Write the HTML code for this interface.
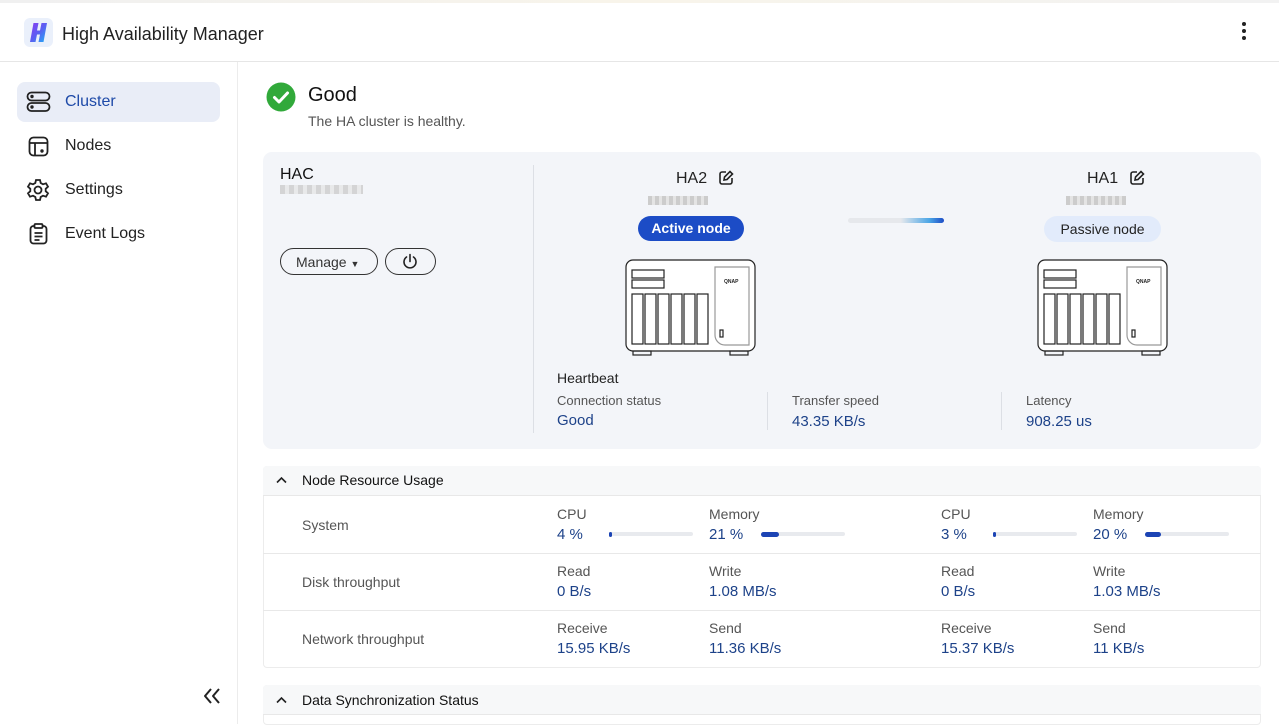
<!DOCTYPE html>
<html><head><meta charset="utf-8"><style>
*{margin:0;padding:0;box-sizing:border-box}
body{width:1279px;height:724px;overflow:hidden;background:#fff;font-family:"Liberation Sans",sans-serif;color:#222;position:relative}
.a{position:absolute;white-space:nowrap}
.t{transform:translateY(1px)}
.lbl{font-size:13px;color:#555}
.val{font-size:15px;color:#1d4289}
.side{font-size:16px;color:#222}
.bar{position:absolute;height:4px;background:#e8eaee;border-radius:2px}
.bar i{position:absolute;left:0;top:-0.5px;height:5px;background:#1c44b4;border-radius:3px}
.row{position:absolute;left:263px;width:998px;border-bottom:1px solid #e8e8e8}
</style></head><body>
<div class="a" style="left:0;top:0;width:1279px;height:3px;background:linear-gradient(90deg,#f0f0f0,#f8f4ea,#f2f2f2)"></div>
<svg class="a" style="left:24px;top:18px" width="29" height="29" viewBox="0 0 29 29"><rect width="29" height="29" rx="6" fill="#eaf0fb"/><defs><linearGradient id="g" x1="0" y1="0" x2="1" y2="1"><stop offset="0" stop-color="#8a3cf0"/><stop offset="0.5" stop-color="#5a5ef2"/><stop offset="1" stop-color="#20b0f5"/></linearGradient></defs><path d="M6 24 L9.5 5 L14.5 5 L13 12.5 L16 12.5 L17.5 5 L23 5 L19.5 24 L14.5 24 L16 16.5 L13 16.5 L11.5 24Z" fill="url(#g)"/></svg>
<div class="a" style="left:62px;top:24px;font-size:18px;color:#222">High Availability Manager</div>
<div class="a" style="left:1242px;top:22px;width:4px;height:18px"><div style="width:4px;height:4px;border-radius:2px;background:#222;margin-bottom:3px"></div><div style="width:4px;height:4px;border-radius:2px;background:#222;margin-bottom:3px"></div><div style="width:4px;height:4px;border-radius:2px;background:#222"></div></div>
<div class="a" style="left:0;top:61px;width:1279px;height:1px;background:#e6e6e6"></div>
<div class="a" style="left:237px;top:62px;width:1px;height:662px;background:#ececec"></div>

<div class="a" style="left:17px;top:82px;width:203px;height:40px;background:#e9edf7;border-radius:8px"></div>
<svg class="a" style="left:26px;top:91px" width="25" height="22" viewBox="0 0 25 22" fill="none" stroke="#222" stroke-width="1.8"><rect x="1.5" y="1.5" width="22" height="8" rx="4"/><rect x="1.5" y="12" width="22" height="8" rx="4"/><circle cx="6" cy="5.5" r=".8" fill="#222"/><circle cx="6" cy="16" r=".8" fill="#222"/></svg>
<div class="a side" style="left:65px;top:93px;color:#1e4aa8">Cluster</div>
<svg class="a" style="left:28px;top:136px" width="21" height="21" viewBox="0 0 21 21" fill="none" stroke="#222" stroke-width="1.8"><rect x="1.5" y="1.5" width="18" height="18" rx="4"/><path d="M1.5 7h18M7 7v12.5"/><circle cx="14" cy="15" r=".8" fill="#222"/></svg>
<div class="a side" style="left:65px;top:137px">Nodes</div>
<svg class="a" style="left:26px;top:178px" width="24" height="24" viewBox="0 0 24 24" fill="none" stroke="#222" stroke-width="1.8"><path d="M10 2h4l.7 3 2.3 1.3 3-1 2 3.4-2.3 2.1v2.4l2.3 2.1-2 3.4-3-1-2.3 1.3-.7 3h-4l-.7-3L7 17.7l-3 1-2-3.4 2.3-2.1v-2.4L2 8.7l2-3.4 3 1L9.3 5z"/><circle cx="12" cy="12" r="3.5"/></svg>
<div class="a side" style="left:65px;top:181px">Settings</div>
<svg class="a" style="left:29px;top:223px" width="19" height="22" viewBox="0 0 19 22" fill="none" stroke="#222" stroke-width="1.8"><rect x="1.5" y="3" width="16" height="17.5" rx="3"/><rect x="5.5" y="1" width="8" height="4" rx="1" fill="#fff"/><path d="M5.5 10h8M5.5 13.5h8M5.5 17h5"/></svg>
<div class="a side" style="left:65px;top:225px">Event Logs</div>
<svg class="a" style="left:203px;top:688px" width="18" height="16" viewBox="0 0 18 16" fill="none" stroke="#222" stroke-width="2" stroke-linejoin="round"><path d="M8 1L2 8l6 7M16 1l-6 7 6 7"/></svg>

<svg class="a" style="left:266px;top:82px" width="30" height="30" viewBox="0 0 30 30"><circle cx="15" cy="15" r="14.5" fill="#31a93a"/><path d="M8.5 15.5l4.5 4.5 8.5-9" fill="none" stroke="#fff" stroke-width="3" stroke-linecap="round" stroke-linejoin="round"/></svg>
<div class="a" style="left:308px;top:84px;font-size:20px;color:#111">Good</div>
<div class="a" style="left:308px;top:113px;font-size:14px;color:#555">The HA cluster is healthy.</div>

<div class="a" style="left:263px;top:152px;width:998px;height:297px;background:#f3f5f9;border-radius:9px"></div>
<div class="a" style="left:280px;top:166px;font-size:16px;color:#111">HAC</div>
<div class="a" style="left:280px;top:185px;width:83px;height:9px;background:repeating-linear-gradient(90deg,#ccc 0 5px,#e6e6e6 5px 9px);opacity:.8"></div>
<div class="a" style="left:280px;top:248px;width:98px;height:27px;border:1px solid #333;border-radius:14px;font-size:14px;padding:5px 0 0 15px;color:#333">Manage <span style="font-size:9px">▼</span></div>
<div class="a" style="left:385px;top:248px;width:51px;height:27px;border:1px solid #333;border-radius:14px"></div>
<svg class="a" style="left:402px;top:253px" width="16" height="17" viewBox="0 0 16 17" fill="none" stroke="#222" stroke-width="1.6" stroke-linecap="round"><path d="M8 1.5v7M4.5 4a6 6 0 1 0 7 0"/></svg>
<div class="a" style="left:533px;top:165px;width:1px;height:268px;background:#dcdfe5"></div>

<div class="a" style="left:676px;top:170px;font-size:16px;color:#222">HA2</div>
<svg class="a" style="left:718px;top:170px" width="16" height="16" viewBox="0 0 16 16" fill="none" stroke="#222" stroke-width="1.6"><path d="M8 2H4a2 2 0 0 0-2 2v8a2 2 0 0 0 2 2h8a2 2 0 0 0 2-2V8"/><path d="M6 10l.5-3L12 1.5l2.5 2.5L9 9.5z"/></svg>
<div class="a" style="left:648px;top:196px;width:60px;height:9px;background:repeating-linear-gradient(90deg,#ccc 0 4px,#e4e4e4 4px 7px)"></div>
<div class="a" style="left:638px;top:216px;width:106px;height:25px;background:#1c4cc6;border-radius:13px;color:#fff;font-size:14px;font-weight:bold;text-align:center;line-height:25px">Active node</div>
<div class="a" style="left:1087px;top:170px;font-size:16px;color:#222">HA1</div>
<svg class="a" style="left:1129px;top:170px" width="16" height="16" viewBox="0 0 16 16" fill="none" stroke="#222" stroke-width="1.6"><path d="M8 2H4a2 2 0 0 0-2 2v8a2 2 0 0 0 2 2h8a2 2 0 0 0 2-2V8"/><path d="M6 10l.5-3L12 1.5l2.5 2.5L9 9.5z"/></svg>
<div class="a" style="left:1066px;top:196px;width:60px;height:9px;background:repeating-linear-gradient(90deg,#ccc 0 4px,#e4e4e4 4px 7px)"></div>
<div class="a" style="left:1044px;top:216px;width:117px;height:26px;background:#e2ebfb;border-radius:13px;color:#222;font-size:14px;text-align:center;line-height:26px">Passive node</div>
<div class="a" style="left:848px;top:218px;width:96px;height:5px;border-radius:3px;background:linear-gradient(90deg,#e6e8ec 0,#e6e8ec 55%,#4aa5e6 85%,#1c4cc6 100%)"></div>

<svg class="a" style="left:625px;top:259px" width="131" height="97" viewBox="0 0 131 97" fill="none" stroke="#222" stroke-width="1.2">
<rect x="1" y="1" width="129" height="91" rx="7" fill="#fff"/><rect x="7" y="11" width="32" height="8"/><rect x="7" y="21" width="32" height="8"/>
<rect x="7" y="35" width="11" height="50"/><rect x="20" y="35" width="11" height="50"/><rect x="33" y="35" width="11" height="50"/><rect x="46" y="35" width="11" height="50"/><rect x="59" y="35" width="11" height="50"/><rect x="72" y="35" width="11" height="50"/>
<path d="M90 8h34v78H100a10 10 0 0 1-10-10z" stroke="#999"/><rect x="95" y="71" width="3" height="7"/>
<text x="99" y="24" font-size="5" font-weight="bold" fill="#222" stroke="none" font-family="Liberation Sans">QNAP</text>
<rect x="8" y="92" width="18" height="4"/><rect x="105" y="92" width="18" height="4"/></svg>
<svg class="a" style="left:1037px;top:259px" width="131" height="97" viewBox="0 0 131 97" fill="none" stroke="#222" stroke-width="1.2">
<rect x="1" y="1" width="129" height="91" rx="7" fill="#fff"/><rect x="7" y="11" width="32" height="8"/><rect x="7" y="21" width="32" height="8"/>
<rect x="7" y="35" width="11" height="50"/><rect x="20" y="35" width="11" height="50"/><rect x="33" y="35" width="11" height="50"/><rect x="46" y="35" width="11" height="50"/><rect x="59" y="35" width="11" height="50"/><rect x="72" y="35" width="11" height="50"/>
<path d="M90 8h34v78H100a10 10 0 0 1-10-10z" stroke="#999"/><rect x="95" y="71" width="3" height="7"/>
<text x="99" y="24" font-size="5" font-weight="bold" fill="#222" stroke="none" font-family="Liberation Sans">QNAP</text>
<rect x="8" y="92" width="18" height="4"/><rect x="105" y="92" width="18" height="4"/></svg>

<div class="a t" style="left:557px;top:369px;font-size:14px;color:#222">Heartbeat</div>
<div class="a lbl t" style="left:557px;top:392px">Connection status</div>
<div class="a val t" style="left:557px;top:411px">Good</div>
<div class="a" style="left:767px;top:392px;width:1px;height:38px;background:#dcdfe5"></div>
<div class="a lbl t" style="left:792px;top:392px">Transfer speed</div>
<div class="a val t" style="left:792px;top:412px">43.35 KB/s</div>
<div class="a" style="left:1001px;top:392px;width:1px;height:38px;background:#dcdfe5"></div>
<div class="a lbl t" style="left:1026px;top:392px">Latency</div>
<div class="a val t" style="left:1026px;top:412px">908.25 us</div>

<div class="a" style="left:263px;top:466px;width:998px;height:202px;border:1px solid #ececec;border-radius:4px"></div>
<div class="row" style="top:466px;height:30px;background:#f7f8f9;border-radius:4px 4px 0 0"></div>
<svg class="a" style="left:276px;top:476px" width="11" height="8" viewBox="0 0 11 8" fill="none" stroke="#222" stroke-width="1.6"><path d="M1 6.5l4.5-4.5 4.5 4.5"/></svg>
<div class="a t" style="left:302px;top:471px;font-size:14px;color:#111">Node Resource Usage</div>
<div class="row" style="top:496px;height:58px"></div>
<div class="row" style="top:553px;height:58px"></div>
<div class="a lbl t" style="left:302px;top:516px;font-size:14px">System</div>
<div class="a lbl t" style="left:302px;top:573px;font-size:14px">Disk throughput</div>
<div class="a lbl t" style="left:302px;top:630px;font-size:14px">Network throughput</div>

<div class="a lbl t" style="left:557px;top:505px;font-size:14px">CPU</div><div class="a val t" style="left:557px;top:525px">4 %</div>
<div class="bar" style="left:609px;top:532px;width:84px"><i style="width:3px"></i></div>
<div class="a lbl t" style="left:709px;top:505px;font-size:14px">Memory</div><div class="a val t" style="left:709px;top:525px">21 %</div>
<div class="bar" style="left:761px;top:532px;width:84px"><i style="width:18px"></i></div>
<div class="a lbl t" style="left:941px;top:505px;font-size:14px">CPU</div><div class="a val t" style="left:941px;top:525px">3 %</div>
<div class="bar" style="left:993px;top:532px;width:84px"><i style="width:3px"></i></div>
<div class="a lbl t" style="left:1093px;top:505px;font-size:14px">Memory</div><div class="a val t" style="left:1093px;top:525px">20 %</div>
<div class="bar" style="left:1145px;top:532px;width:84px"><i style="width:16px"></i></div>

<div class="a lbl t" style="left:557px;top:562px;font-size:14px">Read</div><div class="a val t" style="left:557px;top:582px">0 B/s</div>
<div class="a lbl t" style="left:709px;top:562px;font-size:14px">Write</div><div class="a val t" style="left:709px;top:582px">1.08 MB/s</div>
<div class="a lbl t" style="left:941px;top:562px;font-size:14px">Read</div><div class="a val t" style="left:941px;top:582px">0 B/s</div>
<div class="a lbl t" style="left:1093px;top:562px;font-size:14px">Write</div><div class="a val t" style="left:1093px;top:582px">1.03 MB/s</div>

<div class="a lbl t" style="left:557px;top:619px;font-size:14px">Receive</div><div class="a val t" style="left:557px;top:639px">15.95 KB/s</div>
<div class="a lbl t" style="left:709px;top:619px;font-size:14px">Send</div><div class="a val t" style="left:709px;top:639px">11.36 KB/s</div>
<div class="a lbl t" style="left:941px;top:619px;font-size:14px">Receive</div><div class="a val t" style="left:941px;top:639px">15.37 KB/s</div>
<div class="a lbl t" style="left:1093px;top:619px;font-size:14px">Send</div><div class="a val t" style="left:1093px;top:639px">11 KB/s</div>

<div class="a" style="left:263px;top:685px;width:998px;height:40px;border:1px solid #ececec;border-radius:4px"></div>
<div class="row" style="top:685px;height:30px;background:#f7f8f9;border-radius:4px 4px 0 0"></div>
<svg class="a" style="left:276px;top:696px" width="11" height="8" viewBox="0 0 11 8" fill="none" stroke="#222" stroke-width="1.6"><path d="M1 6.5l4.5-4.5 4.5 4.5"/></svg>
<div class="a t" style="left:302px;top:691px;font-size:14px;color:#111">Data Synchronization Status</div>
</body></html>
